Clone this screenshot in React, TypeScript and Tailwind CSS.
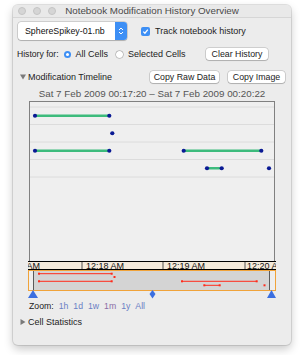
import React from 'react';

const rowLines = [5, 22.5, 40, 57.5, 75];

const segments = [
  { row: 13.75, from: 5, to: 79.3 },
  { row: 48.75, from: 5, to: 79.3 },
  { row: 48.75, from: 153.7, to: 231.3 },
  { row: 66.25, from: 177, to: 191.7 },
];

const dots = [
  { row: 31.25, x: 82.3 },
  { row: 66.25, x: 239 },
];

const overview = [
  { y: 2.7, from: 5, to: 77.7 },
  { y: 10.3, from: 5, to: 77.7 },
  { y: 10.3, from: 148, to: 222.7 },
  { y: 14.3, from: 170.3, to: 185.7 },
];

const zoomLinks = [
  { label: '1h', color: 'text-[#6a80c4]' },
  { label: '1d', color: 'text-[#6a80c4]' },
  { label: '1w', color: 'text-[#6a80c4]' },
  { label: '1m', color: 'text-[#8a6ca6]' },
  { label: '1y', color: 'text-[#6a80c4]' },
  { label: 'All', color: 'text-[#6a80c4]' },
];

function MacButton({ label, width }: { label: string; width: string }) {
  return (
    <div
      className={`${width} h-[12px] flex items-center justify-center whitespace-nowrap bg-white rounded-[3px] shadow-[0_0_0_0.5px_rgba(0,0,0,0.25),0_1px_1px_rgba(0,0,0,0.15)] text-[8.8px] text-[#222] leading-none`}
    >
      {label}
    </div>
  );
}

function DisclosureTriangle() {
  return (
    <svg width="6" height="6" viewBox="0 0 6 6" className="shrink-0">
      <path d="M0 0.5 L6 0.5 L3 5.5 Z" fill="#7a7a7a" />
    </svg>
  );
}

export default function App() {
  return (
    <div className="w-[302px] h-[355px] bg-white font-['Liberation_Sans',Arial,sans-serif] pt-[5px] pl-[13px] overflow-hidden">
      <div className="w-[278px] h-[340px] bg-[#ececec] rounded-[5px] shadow-[0_0_0_1px_rgba(0,0,0,0.1),0_4px_10px_rgba(0,0,0,0.22)] overflow-hidden flex flex-col">
        {/* Title bar */}
        <div className="relative h-[13px] flex items-center justify-center border-b border-[#d6d6d6] bg-[#e9e9e9]">
          <div className="absolute left-[5px] top-[2px] flex gap-[7px]">
            <div className="w-[8px] h-[8px] rounded-full bg-[#d5d5d5] border border-[#c4c4c4]" />
            <div className="w-[8px] h-[8px] rounded-full bg-[#d5d5d5] border border-[#c4c4c4]" />
            <div className="w-[8px] h-[8px] rounded-full bg-[#d5d5d5] border border-[#c4c4c4]" />
          </div>
          <span className="text-[9.8px] text-[#4a4a4a] leading-none">
            Notebook Modification History Overview
          </span>
        </div>

        {/* Notebook + track */}
        <div className="flex items-center mt-[4px] pl-[5px]">
          <div className="w-[109px] h-[18px] flex bg-white rounded-[3px] shadow-[0_0_0_0.5px_rgba(0,0,0,0.25),0_1px_1px_rgba(0,0,0,0.15)] overflow-hidden">
            <div className="flex-1 flex items-center pl-[7px] text-[8.8px] text-[#111] leading-none whitespace-nowrap">
              SphereSpikey-01.nb
            </div>
            <div className="w-[12px] bg-[#3d8ff5] flex items-center justify-center">
              <svg width="6" height="10" viewBox="0 0 6 10">
                <path d="M1 4 L3 2 L5 4 M1 6 L3 8 L5 6" fill="none" stroke="white" strokeWidth="1" />
              </svg>
            </div>
          </div>
          <div className="ml-[14px] w-[9px] h-[9px] rounded-[2px] bg-[#3d8ff5] flex items-center justify-center">
            <svg width="7" height="7" viewBox="0 0 7 7">
              <path d="M1.3 3.6 L2.9 5.2 L5.8 1.6" fill="none" stroke="white" strokeWidth="1.3" />
            </svg>
          </div>
          <span className="ml-[5px] text-[9px] text-[#222] leading-none whitespace-nowrap">Track notebook history</span>
        </div>

        {/* History for */}
        <div className="flex items-center mt-[8px] pl-[4px] h-[12px] whitespace-nowrap">
          <span className="text-[8.6px] text-[#222] leading-none">History for:</span>
          <div className="ml-[5px] w-[7px] h-[7px] rounded-full bg-[#3d8ff5] flex items-center justify-center">
            <div className="w-[3px] h-[3px] rounded-full bg-white" />
          </div>
          <span className="ml-[5px] text-[9px] text-[#222] leading-none">All Cells</span>
          <div className="ml-[8px] w-[7px] h-[7px] rounded-full bg-white shadow-[0_0_0_0.5px_rgba(0,0,0,0.35)]" />
          <span className="ml-[5px] text-[9px] text-[#222] leading-none">Selected Cells</span>
          <div className="ml-auto mr-[23px]">
            <MacButton label="Clear History" width="w-[62px]" />
          </div>
        </div>

        {/* Modification timeline header */}
        <div className="flex items-center mt-[11px] pl-[7px] h-[12px]">
          <DisclosureTriangle />
          <span className="ml-[2px] text-[9px] text-[#222] leading-none whitespace-nowrap">Modification Timeline</span>
          <div className="ml-auto flex gap-[9px] mr-[6px]">
            <MacButton label="Copy Raw Data" width="w-[69px]" />
            <MacButton label="Copy Image" width="w-[57px]" />
          </div>
        </div>

        <div className="mt-[6px] text-center text-[9.8px] text-[#555] leading-none whitespace-nowrap">
          Sat 7 Feb 2009 00:17:20 – Sat 7 Feb 2009 00:20:22
        </div>

        {/* Chart */}
        <div className="ml-[15px] mt-[2px] w-[248px]">
          <div className="mx-[1px] h-[160px] border-x border-t border-[#808080] bg-[#efefef]">
            <svg width="244" height="159" viewBox="0 0 244 159">
              {rowLines.map((y) => (
                <line key={y} x1="0" x2="244" y1={y} y2={y} stroke="#dcdcdc" strokeWidth="1" />
              ))}
              {segments.map((s, i) => (
                <g key={i}>
                  <line x1={s.from} x2={s.to} y1={s.row} y2={s.row} stroke="#3dbb7c" strokeWidth="2.4" />
                  <circle cx={s.from} cy={s.row} r="2.1" fill="#0a1a94" />
                  <circle cx={s.to} cy={s.row} r="2.1" fill="#0a1a94" />
                </g>
              ))}
              {dots.map((d, i) => (
                <circle key={i} cx={d.x} cy={d.row} r="2.1" fill="#0a1a94" />
              ))}
            </svg>
          </div>
          <div className="h-[9px] border-y border-black bg-[#f4eadb] overflow-hidden">
            <svg width="248" height="7" viewBox="0 0 248 7" className="block">
              {[54, 135, 217].map((x) => (
                <line key={x} x1={x} x2={x} y1="0" y2="7" stroke="#555" strokeWidth="1" />
              ))}
              {[
                { x: -26, t: '12:17 AM' },
                { x: 58, t: '12:18 AM' },
                { x: 139, t: '12:19 AM' },
                { x: 219, t: '12:20 AM' },
              ].map((l) => (
                <text key={l.t} x={l.x} y="7" fontSize="9" fill="#111" fontFamily="Liberation Sans, Arial, sans-serif">
                  {l.t}
                </text>
              ))}
            </svg>
          </div>

          {/* Overview strip */}
          <div className="h-[21px] border border-[#f0a33a] flex">
            <div className="w-[4px] bg-[#eeeeee]" />
            <div className="flex-1 bg-[#d4d4d4] border-x border-[#5a5a5a]">
              <svg width="235" height="19" viewBox="0 0 235 19" className="block">
                {overview.map((o, i) => (
                  <g key={i}>
                    <line x1={o.from} x2={o.to} y1={o.y} y2={o.y} stroke="#ff2b1c" strokeWidth="1" />
                    <rect x={o.from - 1} y={o.y - 1} width="2" height="2" fill="#ff2b1c" />
                    <rect x={o.to - 1} y={o.y - 1} width="2" height="2" fill="#ff2b1c" />
                  </g>
                ))}
                <rect x="79.5" y="5" width="2" height="2" fill="#ff2b1c" />
                <rect x="229.5" y="13.3" width="2" height="2" fill="#ff2b1c" />
              </svg>
            </div>
            <div className="w-[5px] bg-[#eeeeee]" />
          </div>

          {/* Range sliders */}
          <svg width="248" height="9" viewBox="0 0 248 9" className="block -mt-[1px]">
            <path d="M5 0 L10 8 L0 8 Z" fill="#3b6fe0" />
            <path d="M124.5 0 L127.5 4 L124.5 8.5 L121.5 4 Z" fill="#3b6fe0" />
            <path d="M243.5 0 L248 8 L239 8 Z" fill="#3b6fe0" />
          </svg>
        </div>

        {/* Zoom links */}
        <div className="flex items-center mt-[3px] pl-[16px] text-[8.7px] leading-none">
          <span className="text-[#222]">Zoom:</span>
          <div className="ml-[5px] flex gap-[5px]">
            {zoomLinks.map((z) => (
              <span key={z.label} className={z.color}>
                {z.label}
              </span>
            ))}
          </div>
        </div>

        {/* Cell statistics */}
        <div className="flex items-center mt-[7px] pl-[7px]">
          <svg width="6" height="6" viewBox="0 0 6 6" className="shrink-0">
            <path d="M0.5 0 L5.5 3 L0.5 6 Z" fill="#7a7a7a" />
          </svg>
          <span className="ml-[2px] text-[9px] text-[#222] leading-none">Cell Statistics</span>
        </div>
      </div>
    </div>
  );
}
